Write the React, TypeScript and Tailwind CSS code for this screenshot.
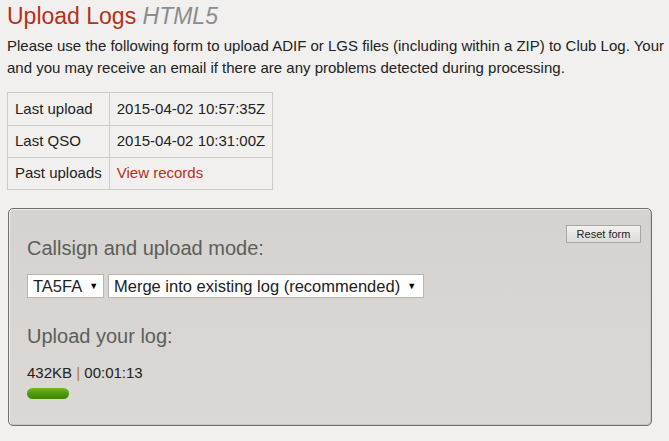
import React from 'react';

const font = { fontFamily: '"Liberation Sans", Arial, sans-serif' };

function Caret() {
	return <span className="ml-[7px] inline-block text-[9px] leading-none text-black">▼</span>;
}

const cell = 'whitespace-nowrap border border-[#cfcbc7] px-[7px]';

export default function App() {
	return (
		<div className="h-[441px] w-[669px] overflow-hidden bg-[#f1f0ee] text-[#222]" style={font}>
			<div className="pl-[7px] pt-[2px]">
				<h1 className="text-[23px] leading-[28px] text-[#b5301c]">
					Upload Logs <em className="text-[#8c8c8c]">HTML5</em>
				</h1>

				<div className="mt-[5px] text-[15px] leading-[22px] text-[#222]">
					<div className="whitespace-nowrap">
						Please use the following form to upload ADIF or LGS files (including within a ZIP) to Club Log. Your
					</div>
					<div className="whitespace-nowrap">
						and you may receive an email if there are any problems detected during processing.
					</div>
				</div>

				{/* Summary table */}
				<table className="mt-[13px] w-[263px] border-collapse text-[15px] text-[#222]">
					<tbody>
						<tr className="h-[33px]">
							<td className={`${cell} w-[101px]`}>Last upload</td>
							<td className={cell}>2015-04-02 10:57:35Z</td>
						</tr>
						<tr className="h-[32px]">
							<td className={cell}>Last QSO</td>
							<td className={cell}>2015-04-02 10:31:00Z</td>
						</tr>
						<tr className="h-[32px]">
							<td className={cell}>Past uploads</td>
							<td className={`${cell} text-[#b5301c]`}>View records</td>
						</tr>
					</tbody>
				</table>
			</div>

			{/* Upload panel */}
			<div className="ml-[8px] mt-[18px] h-[218px] w-[644px] rounded-[5px] border border-[#707070] bg-gradient-to-b from-[#d6d2cf] to-[#dcd8d5] shadow-[inset_1px_1px_0_#f0eeec,inset_-1px_-1px_0_#c8c4c0]">
				<div className="relative px-[18px] pt-[27px]">
					<button
						type="button"
						className="absolute right-[10px] top-[16px] h-[18px] w-[75px] border border-[#a9a6a3] bg-gradient-to-b from-[#f3f2f1] to-[#dddad7] text-[11px] leading-none text-[#222]"
					>
						Reset form
					</button>

					<h2 className="text-[20px] leading-[24px] text-[#59605b]">Callsign and upload mode:</h2>

					<div className="mt-[14px] flex gap-[4px]">
						<div className="flex h-[24px] w-[77px] items-center border border-[#b8b5b2] bg-white pl-[5px] text-[16.5px]">
							TA5FA
							<Caret />
						</div>
						<div className="flex h-[24px] w-[316px] items-center border border-[#b8b5b2] bg-white pl-[5px] text-[16.5px]">
							Merge into existing log (recommended)
							<Caret />
						</div>
					</div>

					<h2 className="mt-[26px] text-[20px] leading-[24px] text-[#59605b]">Upload your log:</h2>

					<div className="mt-[16px] text-[15px] leading-[18px] text-[#222]">
						432KB <span className="text-[#b07a2a]">|</span> 00:01:13
					</div>
					<div className="mt-[6px] h-[11px] w-[42px] rounded-full bg-gradient-to-b from-[#72b81e] via-[#4f9a0c] to-[#3f8507]" />
				</div>
			</div>
		</div>
	);
}
